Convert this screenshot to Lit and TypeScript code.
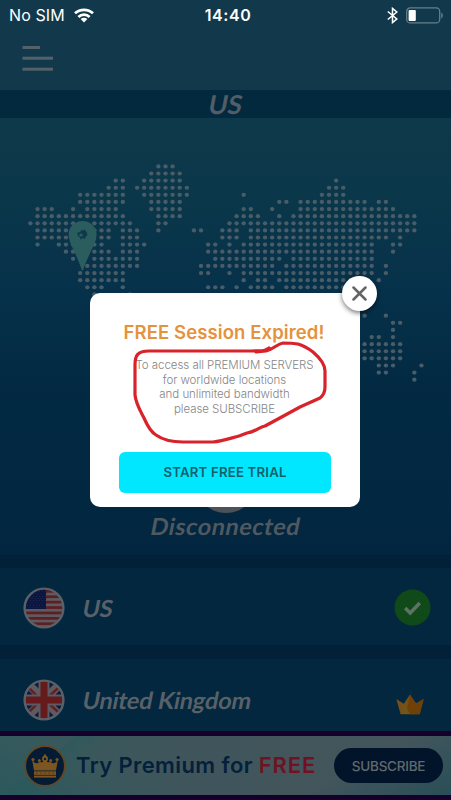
import { LitElement, html, css, svg } from "lit";
import { customElement } from "lit/decorators.js";

// Columns that carry a dot, one entry per map row.
const MAP_ROWS: string[] = [
  "18-20",
  "17-21",
  "12-13 16-21 43",
  "11-13 15-22 42-44",
  "7-13 16-22 30 41-44",
  "7-13 17-21 35-36 38-47 49-50",
  "1-3 6 8-12 17-21 30-31 34 38-51",
  "1-13 18-21 29-32 35 37-54",
  "0-6 9-14 18-19 28-54",
  "1-6 9-11 13-15 18 23-24 27-29 31-54",
  "1-6 10-11 13-15 27-29 31-50 52",
  "1 4-6 9-10 13-16 25-26 28 30-48 51-52",
  "5-6 9-11 13-15 25-48 51",
  "6 9-15 26-35 37-48",
  "8-15 24-34 36-48 50",
  "7-13 24-25 28 30-48 50",
  "7-13 30 32-33 35-46 49",
  "8-10 13 25-27 29 31-34 36-46",
  "9 14",
  "",
  "",
  "47 50",
  "51-52",
  "51",
  "48-49 51",
  "47-52",
  "47-52",
  "47-52",
  "49-51 55",
  "49-50 54",
  "54",
];

const STEP = 7.11;

function mapDots() {
  const dots = [];
  for (let r = 0; r < MAP_ROWS.length; r++) {
    for (const part of MAP_ROWS[r].split(" ").filter(Boolean)) {
      const [a, b = a] = part.split("-").map(Number);
      for (let c = a; c <= b; c++) {
        dots.push(svg`<ellipse cx=${(30.4 + c * STEP).toFixed(2)} cy=${(48.4 + r * STEP).toFixed(2)} rx="2.2" ry="2.1"/>`);
      }
    }
  }
  return dots;
}

@customElement("world-map")
class WorldMap extends LitElement {
  static styles = css`
    :host { display: block; }
    svg { display: block; }
  `;
  render() {
    return html`<svg width="451" height="290" viewBox="0 0 451 290">
      <g fill="#485d68">${mapDots()}</g>
      <path fill="#2b5c5e"
        d="M82.600 103c-8 0-14 6-14 13.600 0 5 2 9.500 5 15.400 3 6.500 6 13 8.300 20.500h1c2.500-7.500 5.600-14 8.600-20.500 3-6 5.100-10.400 5.100-15.400 0-7.600-6-13.600-14-13.600z"/>
      <path d="M77.300 114.500l2.700-.2 1.300-2.300 2 .6.800-1.300 2.500 2.700 1 2.800-1.800 1.700-1 2.400-2-1-2 1.600-1.300-2.600-1.700-.8z" fill="#0c394b"/>
      <ellipse cx="81" cy="117" rx="1.800" ry="1.500" fill="#2b5c5e"/>
    </svg>`;
  }
}

@customElement("flag-icon")
class FlagIcon extends LitElement {
  static properties = { country: { type: String } };
  declare country: string;
  static styles = css`
    :host { display: block; width: 42px; height: 42px; }
    svg { display: block; }
  `;
  us() {
    const rows = [0, 1, 2, 3, 4, 5, 6];
    const stars = [];
    for (let y = 0; y < 8; y++)
      for (let x = 0; x < 7; x++)
        stars.push(svg`<circle cx=${4.5 + x * 3 + (y % 2) * 1.5} cy=${4.6 + y * 2.3} r=".45" fill="#36415f"/>`);
    return svg`<rect width="42" height="42" fill="#5d5a62"/>
      ${rows.map((i) => svg`<rect y=${3 + i * 5.4} width="42" height="2.700" fill="#5e1f22"/>`)}
      <rect width="23" height="22" fill="#0b1640"/>${stars}`;
  }
  uk() {
    return svg`<rect width="42" height="42" fill="#0b1b3f"/>
      <path d="M0 0l42 42M42 0L0 42" stroke="#5d5a62" stroke-width="8.500"/>
      <path d="M-1 2l20 20M43 2L23 20M-1 40l20-20M43 40L23 22" stroke="#651d1e" stroke-width="2.400"/>
      <path d="M21 0v42M0 21h42" stroke="#5d5a62" stroke-width="11"/>
      <path d="M21 0v42M0 21h42" stroke="#651a1b" stroke-width="7"/>`;
  }
  render() {
    return html`<svg width="42" height="42" viewBox="0 0 42 42">
      <defs><clipPath id="c"><circle cx="21" cy="21" r="19"/></clipPath></defs>
      <g clip-path="url(#c)">${this.country === "us" ? this.us() : this.uk()}</g>
      <circle cx="21" cy="21" r="19.400" fill="none" stroke="#5a6067" stroke-width="2.400"/>
    </svg>`;
  }
}

@customElement("app-root")
class AppRoot extends LitElement {
  static styles = css`
    :host {
      display: block; position: relative; width: 451px; height: 800px; overflow: hidden;
      background: #022037; font-family: Lato, "Open Sans", sans-serif;
    }
    .page { display: flex; flex-direction: column; height: 800px; }
    .status {
      height: 30px; box-sizing: border-box; padding: 0 8px 0 9px; background: #11394b; color: #fff;
      display: grid; grid-template-columns: 1fr auto 1fr; align-items: center;
      font: 16px Inter, sans-serif; line-height: 30px;
    }
    .left { display: flex; align-items: center; gap: 9px; letter-spacing: 0.1px; }
    .time { font-weight: 600; letter-spacing: 0.6px; padding-left: 4px; }
    .right { display: flex; align-items: center; justify-content: flex-end; gap: 8px; }
    svg { display: block; }
    .head { height: 60px; background: #11394b; padding: 16px 0 0 22px; box-sizing: border-box; }
    .band {
      height: 28px; background: #03293f; text-align: center; color: #525d66;
      font: 700 26px/28px Lato, sans-serif;
    }
    .slant { display: inline-block; transform: skewX(-11deg); }
    .hero {
      height: 438px; display: flex; flex-direction: column; align-items: center;
      background: linear-gradient(#0e394b 0, #0b374a 18%, #06314a 40%, #032a43 60%, #02263f 100%);
      box-sizing: border-box;
    }
    .orb { width: 62px; height: 62px; border-radius: 50%; background: #4c5257; margin-top: 43px; }
    .state { font: 700 23.500px/27px Lato, sans-serif; color: #50595f; letter-spacing: 0.5px; }
    .card {
      height: 77px; flex: none; margin-top: 13px; padding: 2px 20px 0 23px; box-sizing: border-box;
      background: #02273f; display: flex; align-items: center;
      color: #596168; font: 700 23.500px/30px Lato, sans-serif; letter-spacing: -0.15px;
    }
    .card.second { height: 72px; margin-top: 14px; padding-top: 9px; padding-right: 27px; }
    .name { flex: 1; padding-left: 18px; }
    .second .crown { margin-top: 9px; }
    .banner {
      height: 69px; flex: none; box-sizing: border-box; border-top: 5px solid #14002a; border-bottom: 5px solid #14002a;
      background:
        linear-gradient(140deg, transparent 0 34%, #24595b66 35%, transparent 52%) 0 0 / 150px 100% no-repeat,
        linear-gradient(25deg, #1f575c77, transparent 45%) 0 0 / 220px 100% no-repeat,
        linear-gradient(330deg, #17495599, transparent 50%) 100% 0 / 190px 100% no-repeat,
        linear-gradient(90deg, #365a5c, #40555b 45%, #44565c);
      display: flex; align-items: center; padding: 0 8px 0 24px;
    }
    .promo {
      padding-left: 10px; color: #04203a; white-space: nowrap; flex: 1; margin-top: -1px;
      font: 600 22px/30px Inter, sans-serif; letter-spacing: 0.4px;
    }
    .promo b { color: #701222; font-weight: 600; letter-spacing: 0.9px; }
    .sub {
      width: 109px; height: 35px; border-radius: 18px; background: #02142a; color: #62696e;
      display: grid; place-items: center; font: 500 13.500px Inter, sans-serif; letter-spacing: -0.25px;
    }
    .modal {
      position: absolute; left: 90px; top: 293px; width: 270px; height: 214px; box-sizing: border-box;
      background: #fff; border-radius: 10px; display: flex; flex-direction: column; align-items: center;
      padding-top: 27px; color: #858585;
    }
    .title { color: #e5923c; font: 600 18.500px/24px Inter, sans-serif; white-space: nowrap; letter-spacing: 0.1px; margin-right: 2px; }
    .copy { margin: 14px 1px 0 0; text-align: center; font: 300 11.500px/14.500px Inter, sans-serif; letter-spacing: -0.05px; white-space: nowrap; }
    .cta {
      margin-top: 36px; width: 212px; height: 41px; border-radius: 6px; background: #00e7ff; color: #135f6b;
      display: grid; place-items: center; font: 600 13.200px Inter, sans-serif; letter-spacing: 0.2px; padding-bottom: 1px; box-sizing: border-box;
    }
    .close {
      position: absolute; left: 342px; top: 276px; width: 35px; height: 35px; border-radius: 50%;
      background: #fff; display: grid; place-items: center; box-shadow: 0 2px 5px #0008;
    }
    .marker { position: absolute; left: 125px; top: 335px; pointer-events: none; }
  `;

  render() {
    return html`
      <div class="page">
        <div class="status">
          <div class="left">No SIM
            <svg width="20" height="15" viewBox="0 0 20 15" fill="none" stroke="#fff" stroke-width="2.800">
              <path d="M1 5.300C6 .6 14 .6 19 5.300"/><path d="M4.400 8.900c3.200-3 8-3 11.200 0"/>
              <path d="M10 14.600l3.400-3.500c-2-1.700-4.800-1.700-6.800 0z" fill="#fff" stroke="none"/>
            </svg>
          </div>
          <div class="time">14:40</div>
          <div class="right">
            <svg width="11" height="17" viewBox="0 0 11 17" fill="none" stroke="#fff" stroke-width="1.500">
              <path d="M.8 4.500l9 7.500-4.300 3.600V1.400L9.800 5 .8 12.500"/>
            </svg>
            <svg width="37" height="17" viewBox="0 0 37 17">
              <rect x=".7" y=".9" width="33" height="15" rx="3.500" fill="none" stroke="#66808b" stroke-width="1.300"/>
              <rect x="2.600" y="3" width="7.200" height="11" rx="1" fill="#fff"/>
              <path d="M35.300 5.500c2 1 2 5 0 6z" fill="#66808b"/>
            </svg>
          </div>
        </div>
        <div class="head">
          <svg width="32" height="26" viewBox="0 0 32 26" fill="#53616a">
            <rect x=".5" width="17.500" height="3"/><rect x=".5" y="10.700" width="30.500" height="3"/><rect x=".5" y="21.700" width="30.500" height="3"/>
          </svg>
        </div>
        <div class="band"><span class="slant">US</span></div>
        <div class="hero">
          <world-map></world-map>
          <div class="orb"></div>
          <div class="state"><span class="slant">Disconnected</span></div>
        </div>
        <div class="card">
          <flag-icon country="us"></flag-icon>
          <span class="name"><span class="slant">US</span></span>
          <svg width="37" height="37" viewBox="0 0 37 37">
            <circle cx="18.500" cy="18.500" r="18" fill="#104a18"/>
            <path d="M11.200 19l5 5 9.600-10" fill="none" stroke="#5e7364" stroke-width="3.500"/>
          </svg>
        </div>
        <div class="card second">
          <flag-icon country="uk"></flag-icon>
          <span class="name"><span class="slant">United Kingdom</span></span>
          <svg class="crown" width="28" height="21" viewBox="0 0 28 21">
            <path d="M.3 5l7.500 4.800L14 .5l6 9 7.700-4.500-4 15.300H4.600z" fill="#765016"/>
            <path d="M14 .5l6 9 7.700-4.500-4 15.300H14l-3-5z" fill="#704009"/>
            <path d="M8 10l6 10H4.600z" fill="#70561a"/>
          </svg>
        </div>
        <div class="banner">
          <svg width="42" height="42" viewBox="0 0 42 42">
            <circle cx="21" cy="21" r="19.800" fill="#041b34" stroke="#67451f" stroke-width="1.700"/>
            <g fill="#7d5521">
              <path d="M10 25.500L8 14c2 4.500 5 5.500 8 2.500 1 1.500 3 1 3.500-1L19 12l2-3.500 2 3.500-.5 3.500c.5 2 2.500 2.500 3.500 1 3 3 6 2 8-2.500L32 25.500z"/>
              <circle cx="9" cy="14.500" r="1.600"/><circle cx="33" cy="14.500" r="1.600"/><circle cx="15.300" cy="15.500" r="1.500"/><circle cx="26.700" cy="15.500" r="1.500"/><circle cx="21" cy="13.800" r="3"/>
              <rect x="10" y="26.300" width="22" height="3.600"/><rect x="10" y="30.600" width="22" height="2"/>
            </g>
            <circle cx="21" cy="14" r="1.200" fill="#041b34"/>
            <path d="M12 28h18" stroke="#352f2c" stroke-width="1" stroke-dasharray="1.200 3"/>
          </svg>
          <div class="promo">Try Premium for <b>FREE</b></div>
          <div class="sub">SUBSCRIBE</div>
        </div>
      </div>
      <div class="modal">
        <div class="title">FREE Session Expired!</div>
        <div class="copy">To access all PREMIUM SERVERS<br />for worldwide locations<br />and unlimited bandwidth<br />please SUBSCRIBE</div>
        <div class="cta">START FREE TRIAL</div>
      </div>
      <div class="close">
        <svg width="15" height="15" viewBox="0 0 15 15"><path d="M1.500 1.500l12 12M13.500 1.500l-12 12" stroke="#646464" stroke-width="2.500" stroke-linecap="round"/></svg>
      </div>
      <svg class="marker" width="210" height="112" viewBox="0 0 210 112" fill="none" stroke="#d8232a" stroke-width="3.200" stroke-linecap="round" stroke-linejoin="round">
        <path d="M144 13C138 18 133 15 127 16H24C12 16 10 21 10 30V60C11 69 15 75 19 83C22 90 26 97 31 100C38 105 48 107 58 107H88C98 106 106 103 114 101L122 98C130 97 134 92 140 91L153 84L175 72L195 63Q200 59 200 52V36C200 29 195 23 188 17Q180 11 173 9Q167 8 158 8C152 9 149 14 141 16L131 17"/>
      </svg>
    `;
  }
}
